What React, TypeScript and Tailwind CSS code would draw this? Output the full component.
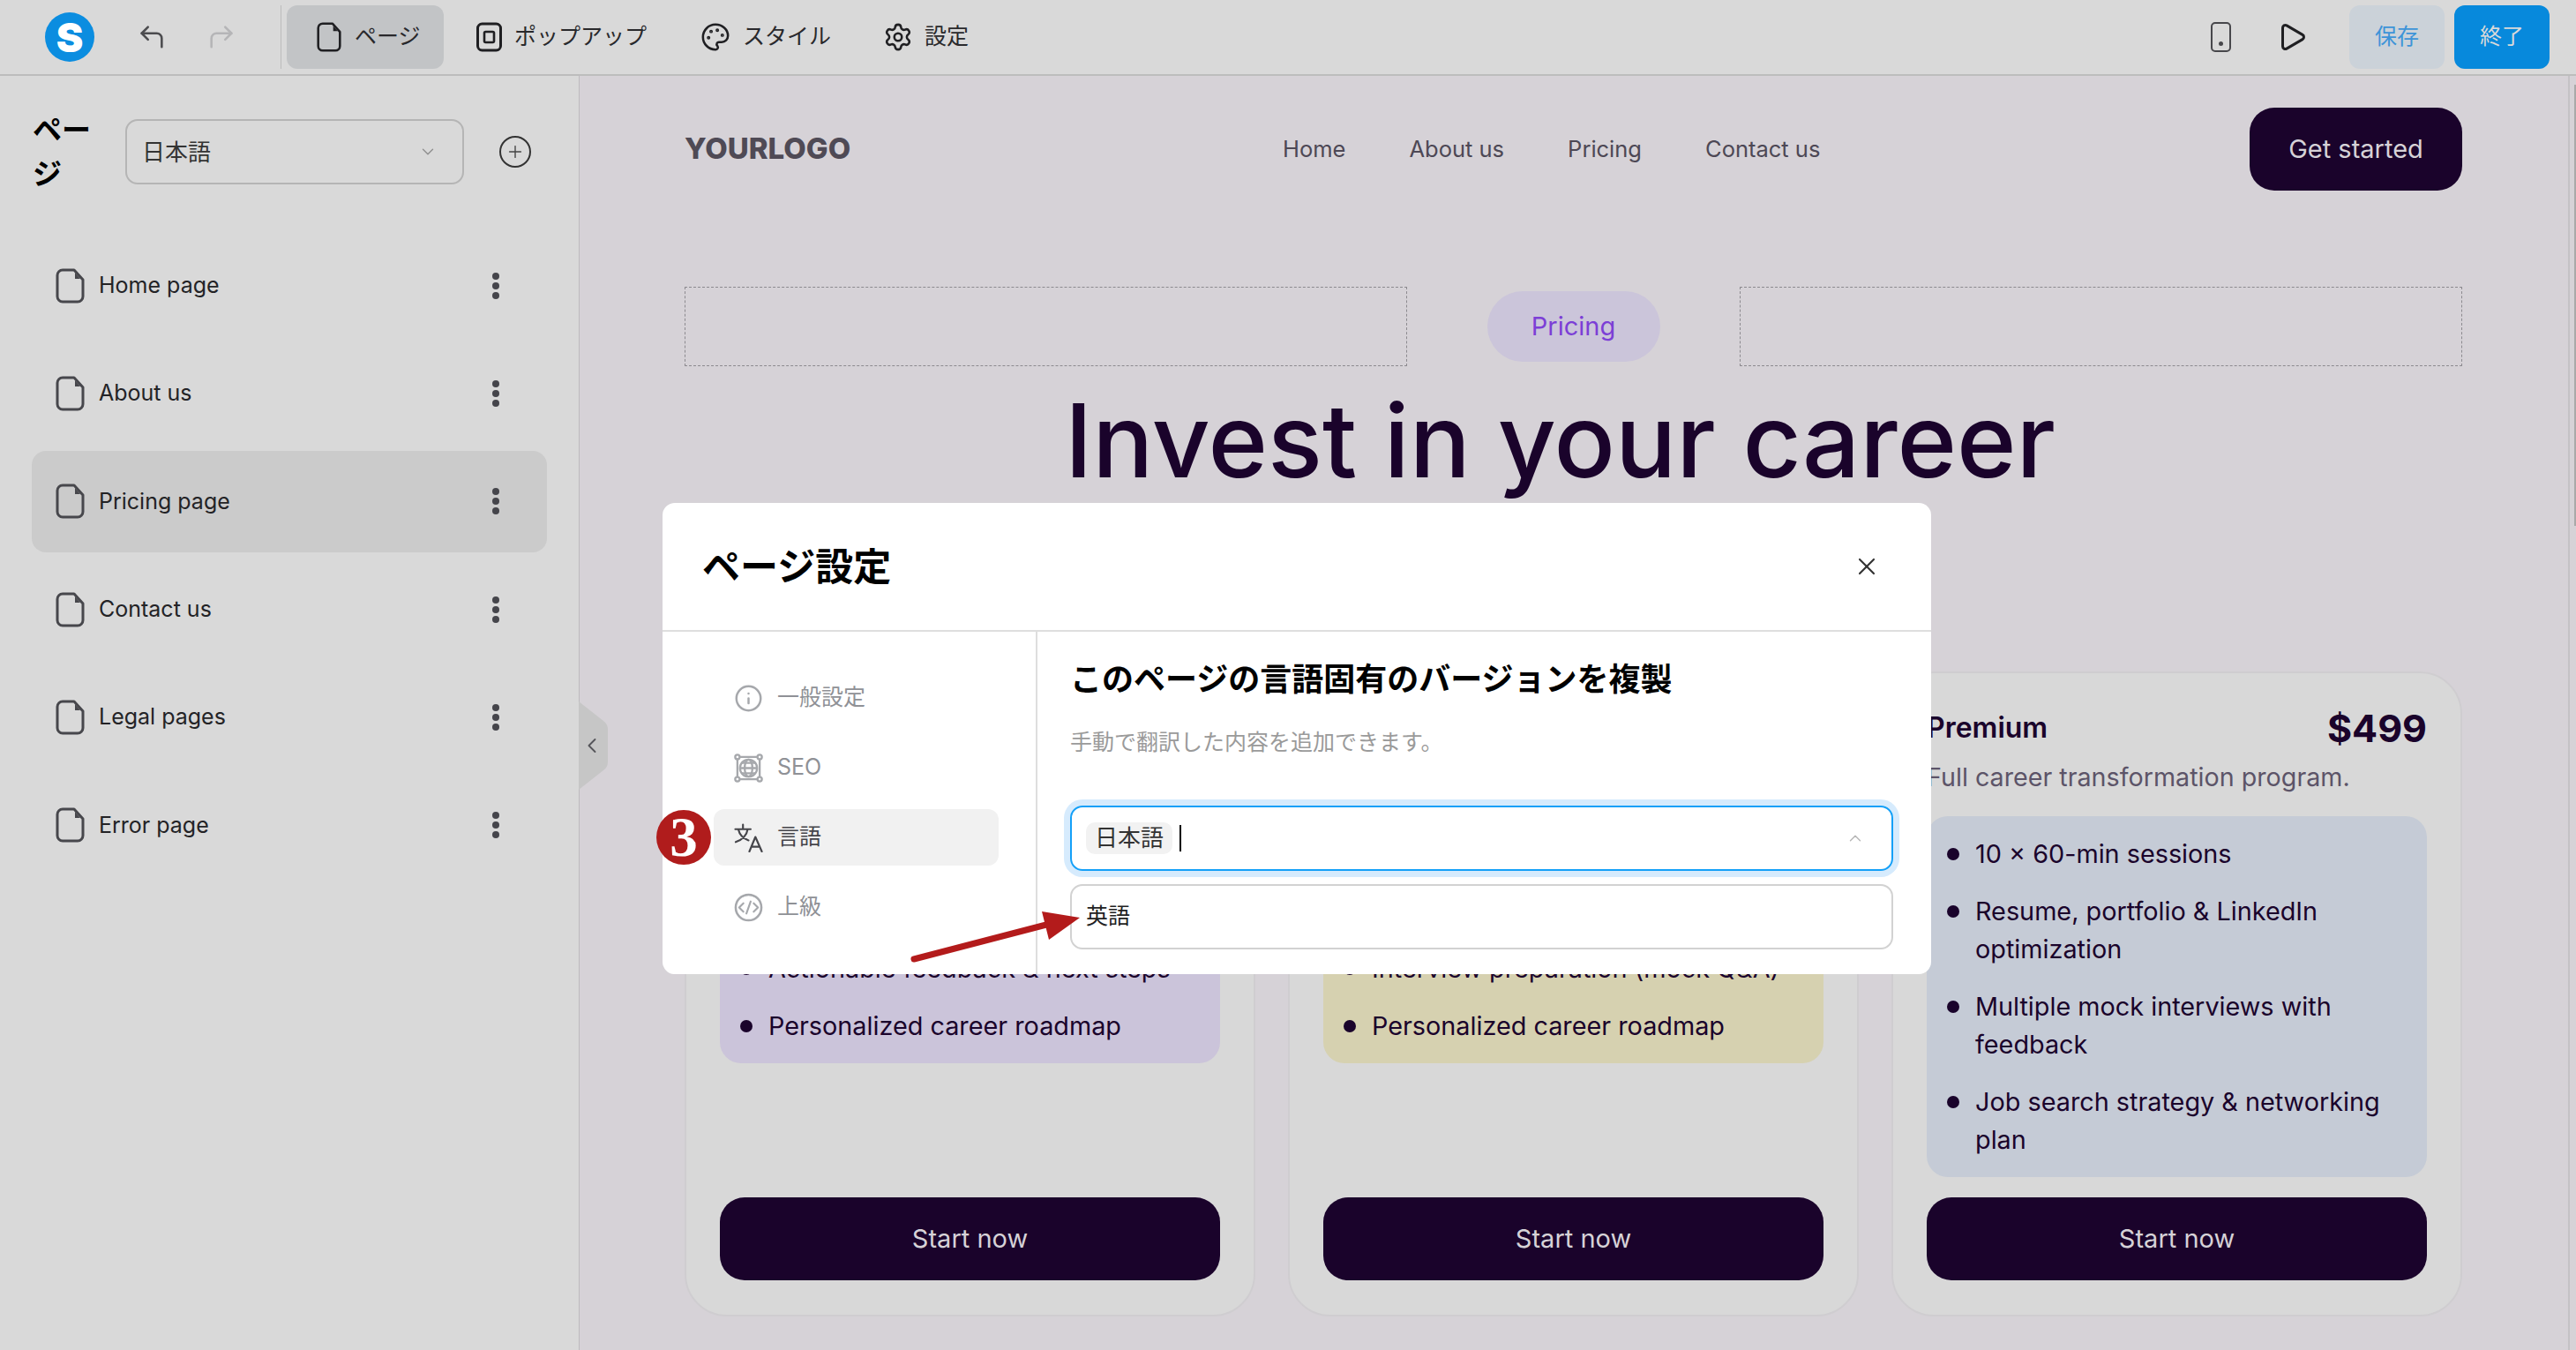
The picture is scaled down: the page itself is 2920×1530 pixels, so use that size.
import { CornerUpLeft, CornerUpRight, Palette, Settings, Play, ChevronDown, ChevronUp, ChevronLeft, Plus, X, Info } from "lucide-react";

const FONT = "font-['Inter','Noto_Sans_CJK_JP',sans-serif]";

const pages = ["Home page", "About us", "Pricing page", "Contact us", "Legal pages", "Error page"];

// the first two cards are mostly behind the dialog, only their lower rows show
const plans = [
  {
    name: "",
    price: "",
    blurb: "",
    panel: "bg-[#cbc4da]",
    items: ["Actionable feedback & next steps", "Personalized career roadmap"],
  },
  {
    name: "",
    price: "",
    blurb: "",
    panel: "bg-[#d6d1b0]",
    items: ["Interview preparation (mock Q&A)", "Personalized career roadmap"],
  },
  {
    name: "Premium",
    price: "$499",
    blurb: "Full career transformation program.",
    panel: "bg-[#c5cbd6]",
    items: [
      "10 × 60-min sessions",
      "Resume, portfolio & LinkedIn optimization",
      "Multiple mock interviews with feedback",
      "Job search strategy & networking plan",
    ],
  },
];

function FileIcon({ className }: { className?: string }) {
  return (
    <svg viewBox="0 0 33 40" className={className} fill="none" stroke="currentColor" strokeWidth="3" strokeLinejoin="round">
      <path d="M9 2h12l10 11v19a6 6 0 0 1-6 6H8a6 6 0 0 1-6-6V8a6 6 0 0 1 6-6z" />
      <path d="M22 5l6 7h-6z" fill="currentColor" stroke="none" />
    </svg>
  );
}

function Dots() {
  return (
    <svg viewBox="0 0 10 30" className="w-[10px] h-[30px] text-[#45454b]" fill="currentColor">
      <circle cx="5" cy="4" r="4" />
      <circle cx="5" cy="15" r="4" />
      <circle cx="5" cy="26" r="4" />
    </svg>
  );
}

function SeoIcon() {
  return (
    <svg viewBox="0 0 34 34" className="w-[33px] h-[33px]" fill="none" stroke="currentColor" strokeWidth="2.4">
      <circle cx="17" cy="17" r="10" />
      <ellipse cx="17" cy="17" rx="4.5" ry="10" />
      <path d="M7 17h20M9 11h16M9 23h16" />
      <circle cx="4" cy="4" r="2.6" />
      <circle cx="30" cy="4" r="2.6" />
      <circle cx="4" cy="30" r="2.6" />
      <circle cx="30" cy="30" r="2.6" />
      <path d="M7 4h20M7 30h20M4 7v20M30 7v20" />
    </svg>
  );
}

function CodeCircleIcon() {
  return (
    <svg viewBox="0 0 34 34" className="w-[33px] h-[33px]" fill="none" stroke="currentColor" strokeWidth="2.6" strokeLinecap="round" strokeLinejoin="round">
      <circle cx="17" cy="17" r="15" />
      <path d="M11 12l-5 5 5 5M23 12l5 5-5 5M19.5 10l-5 14" strokeWidth="2.2" />
    </svg>
  );
}

function TranslateIcon() {
  return (
    <svg viewBox="0 0 34 34" className="w-[33px] h-[33px]" fill="none" stroke="currentColor" strokeWidth="2.2" strokeLinecap="round" strokeLinejoin="round">
      <path d="M1.5 7h18M10.5 1.5V7M5 7c1.500 6.500 6 11 12 13M16 7c-1 6.500-6 12-14 15" />
      <path d="M18 33l7-17 7.500 17M20.500 27.500h9.500" />
    </svg>
  );
}

function PopupIcon() {
  return (
    <svg viewBox="0 0 29 34" className="w-[29px] h-[34px]" fill="none" stroke="#1f1f22" strokeWidth="3">
      <rect x="1.5" y="2" width="26" height="30" rx="5" />
      <rect x="9" y="11" width="11" height="12" rx="1.5" strokeWidth="2.6" />
    </svg>
  );
}

function TopBar() {
  return (
    <header className="h-[86px] shrink-0 flex items-center border-b-2 border-[#bdbdbd] bg-[#d9d9d9]">
      <div className="ml-[51px] w-[56px] h-[56px] rounded-full bg-[#0b8de0] flex items-center justify-center text-white font-black text-[46px] leading-none">
        S
      </div>
      <CornerUpLeft className="ml-[48px] w-[34px] h-[34px] text-[#4c4c4f]" strokeWidth={1.8} />
      <CornerUpRight className="ml-[45px] w-[34px] h-[34px] text-[#b5b5b7]" strokeWidth={1.8} />
      <div className="ml-[50px] w-px h-[72px] bg-[#bcbcbc]" />
      <div className="ml-[6px] w-[178px] h-[72px] rounded-[12px] bg-[#c2c4c6] flex items-center pl-[34px] gap-[15px]">
        <FileIcon className="w-[28px] h-[34px] text-[#1f1f22]" />
        <span className="text-[25px] text-[#29292c]">ページ</span>
      </div>
      <div className="ml-[37px] flex items-center gap-[14px]">
        <PopupIcon />
        <span className="text-[25px] text-[#29292c]">ポップアップ</span>
      </div>
      <div className="ml-[61px] flex items-center gap-[14px]">
        <Palette className="w-[34px] h-[34px] text-[#1f1f22]" strokeWidth={1.8} />
        <span className="text-[25px] text-[#29292c]">スタイル</span>
      </div>
      <div className="ml-[59px] flex items-center gap-[13px]">
        <Settings className="w-[34px] h-[34px] text-[#1f1f22]" strokeWidth={1.8} />
        <span className="text-[25px] text-[#29292c]">設定</span>
      </div>
      <div className="ml-auto mr-[30px] flex items-center">
        <div className="w-[23px] h-[34px] rounded-[5px] border-[2.5px] border-[#47474b] flex items-end justify-center pb-[5px]">
          <div className="w-[5px] h-[5px] rounded-full bg-[#47474b]" />
        </div>
        <Play className="ml-[51px] w-[36px] h-[36px] text-[#1f1f22]" strokeWidth={2} />
        <div className="ml-[47px] w-[108px] h-[72px] rounded-[12px] bg-[#cbd2d9] flex items-center justify-center text-[25px] text-[#3d94d8]">保存</div>
        <div className="ml-[11px] w-[108px] h-[72px] rounded-[12px] bg-[#0789dc] flex items-center justify-center text-[25px] text-[#d9d9d9]">終了</div>
      </div>
    </header>
  );
}

function Sidebar() {
  return (
    <aside className="relative w-[657px] shrink-0 bg-[#d9d9d9] border-r border-[#bdbbbe]">
      <div className="mt-[36px] h-[100px] pl-[37px] flex items-center">
        <h2 className="w-[68px] text-[33px] leading-[50px] font-bold text-black">ページ</h2>
        <div className="ml-[37px] w-[384px] h-[74px] rounded-[14px] border-2 border-[#b5b5b5] flex items-center justify-between pl-[17px] pr-[28px]">
          <span className="text-[26px] text-[#333]">日本語</span>
          <ChevronDown className="w-[22px] h-[22px] text-[#8f8f8f]" strokeWidth={1.5} />
        </div>
        <div className="ml-[40px] w-[36px] h-[36px] rounded-full border-2 border-[#333] flex items-center justify-center">
          <Plus className="w-[22px] h-[22px] text-[#444]" strokeWidth={1.5} />
        </div>
      </div>
      <ul className="mt-[44px] ml-[36px] mr-[36px] flex flex-col gap-[7.4px]">
        {pages.map((p) => (
          <li
            key={p}
            className={`h-[115px] rounded-[16px] flex items-center pl-[27px] pr-[53px] ${p === "Pricing page" ? "bg-[#cbcbcb]" : ""}`}
          >
            <FileIcon className="w-[33px] h-[40px] text-[#47474c]" />
            <span className="ml-[16px] text-[25px] text-[#232326]">{p}</span>
            <span className="ml-auto flex">
              <Dots />
            </span>
          </li>
        ))}
      </ul>
      <div className="absolute left-full top-[709px] w-[33px] h-[100px] text-[#c6c6c6]">
        <svg viewBox="0 0 33 100" className="w-[33px] h-[100px]" fill="currentColor">
          <path d="M0 0l28 22a12 12 0 0 1 5 10v36a12 12 0 0 1-5 10L0 100z" />
        </svg>
        <ChevronLeft className="absolute left-[1px] top-[36px] w-[28px] h-[28px] text-[#55555a]" strokeWidth={1.6} />
      </div>
    </aside>
  );
}

function PlanCard({ plan }: { plan: (typeof plans)[number] }) {
  return (
    <div className="h-[731px] rounded-[48px] border-2 border-[#cfcdd0] bg-[#d8d8d8] px-[38px] pt-[34px] pb-[39px] flex flex-col">
      <div className="flex items-center justify-between h-[56px]">
        <span className="text-[32px] font-semibold text-[#1a032b]">{plan.name}</span>
        <span className="text-[43px] font-bold text-[#1a032b]">{plan.price}</span>
      </div>
      <p className="mt-[7px] h-[42px] text-[28.700px] leading-[42px] whitespace-nowrap text-[#5c5468]">{plan.blurb}</p>
      <ul className={`mt-[23px] min-h-[280px] rounded-[24px] px-[23px] py-[21px] flex flex-col justify-end gap-[22px] ${plan.panel}`}>
        {plan.items.map((it) => (
          <li key={it} className="flex text-[28.800px] leading-[43px] text-[#1a032b]">
            <span className="mt-[15px] w-[14px] h-[14px] shrink-0 rounded-full bg-[#1a032b]" />
            <span className="ml-[18px]">{it}</span>
          </li>
        ))}
      </ul>
      <button className="mt-auto h-[94px] rounded-[28px] bg-[#1a032b] text-[29px] text-[#d6d2d7]">Start now</button>
    </div>
  );
}

function Canvas() {
  return (
    <main className="flex-1 flex bg-[#d6d2d7] min-w-0">
      <div className="flex-1 pl-[119px] pr-[120px] pt-[36px]">
        <nav className="flex items-center h-[94px]">
          <span className="w-[678px] text-[33px] font-extrabold text-[#4f4a55]">YOURLOGO</span>
          <div className="flex gap-[72px] text-[25.500px] text-[#4d4855]">
            <span>Home</span>
            <span>About us</span>
            <span>Pricing</span>
            <span>Contact us</span>
          </div>
          <button className="ml-auto w-[241px] h-[94px] rounded-[28px] bg-[#1a032b] text-[29px] text-[#d6d2d7]">Get started</button>
        </nav>
        <div className="mt-[109px] flex items-center justify-between">
          <div className="w-[819px] h-[90px] border border-dashed border-[#8c8a8f]" />
          <div className="w-[196px] h-[80px] rounded-full bg-[#cbc5da] flex items-center justify-center text-[29px] text-[#7c3fd6]">Pricing</div>
          <div className="w-[819px] h-[90px] border border-dashed border-[#8c8a8f]" />
        </div>
        <h1 className="mt-[17px] h-[136px] pr-[30px] text-center text-[115px] leading-[136px] font-medium text-[#1a032b]">Invest in your career</h1>
        <div className="mt-[193px] grid grid-cols-3 gap-[37px]">
          {plans.map((p) => (
            <PlanCard key={p.panel} plan={p} />
          ))}
        </div>
      </div>
      <div className="w-[9px] shrink-0 border-l-2 border-[#c4c2c5] pt-[10px]">
        <div className="ml-auto w-[2px] h-[500px] bg-[#a9a9a9]" />
      </div>
    </main>
  );
}

const sideItems = [
  { label: "一般設定", icon: <Info className="w-[33px] h-[33px]" strokeWidth={1.8} /> },
  { label: "SEO", icon: <SeoIcon /> },
  { label: "言語", icon: <TranslateIcon />, active: true },
  { label: "上級", icon: <CodeCircleIcon /> },
];

function Modal() {
  return (
    <div className="absolute left-[751px] top-[570px] w-[1438px] h-[534px] rounded-[14px] bg-white flex flex-col overflow-hidden">
      <div className="h-[146px] shrink-0 border-b-2 border-[#dedede] flex items-center justify-between pl-[45px] pr-[57px]">
        <h2 className="text-[43px] font-bold text-black">ページ設定</h2>
        <X className="w-[32px] h-[32px] text-[#333]" strokeWidth={1.6} />
      </div>
      <div className="flex-1 flex">
        <div className="w-[425px] shrink-0 border-r-2 border-[#dedede] pl-[58px] pt-[43px] flex flex-col gap-[15px]">
          {sideItems.map((s) => (
            <div
              key={s.label}
              className={`w-[323px] h-[64px] rounded-[12px] flex items-center pl-[23px] gap-[16px] text-[25px] ${s.active ? "bg-[#f1f1f1] text-[#45454a]" : "text-[#a6a8ac]"}`}
            >
              {s.icon}
              <span className={s.active ? "text-[#45454a]" : "text-[#8f9196]"}>{s.label}</span>
            </div>
          ))}
        </div>
        <div className="flex-1 pl-[37px] pr-[43px]">
          <h3 className="mt-[28px] text-[36px] leading-[52px] font-bold text-black">このページの言語固有のバージョンを複製</h3>
          <p className="mt-[27px] text-[25px] leading-[36px] text-[#9a9a9a]">手動で翻訳した内容を追加できます。</p>
          <div className="mt-[54px] h-[74px] rounded-[14px] border-2 border-[#14a0f8] ring-[7px] ring-[#d6ebfd] flex items-center pl-[16px] pr-[30px]">
            <span className="h-[36px] px-[10px] rounded-[10px] bg-[#f2f2f2] text-[26px] leading-[36px] text-[#333]">日本語</span>
            <span className="ml-[8px] w-[2px] h-[30px] bg-black" />
            <ChevronUp className="ml-auto w-[22px] h-[22px] text-[#b5b5b5]" strokeWidth={1.5} />
          </div>
          <div className="mt-[15px] h-[74px] rounded-[14px] border-2 border-[#d2d2d2] flex items-center pl-[16px] text-[25px] text-[#222]">英語</div>
        </div>
      </div>
    </div>
  );
}

export default function App() {
  return (
    <div className={`relative w-[2920px] h-[1530px] overflow-hidden flex flex-col ${FONT}`}>
      <TopBar />
      <div className="flex-1 flex min-h-0">
        <Sidebar />
        <Canvas />
      </div>
      <Modal />
      {/* step marker and arrow sit on top of the dialog */}
      <div className="absolute left-[744px] top-[918px] w-[62px] h-[62px] rounded-full bg-[#b01c1c] flex items-center justify-center text-white font-bold text-[63px] leading-none font-['Liberation_Serif',serif]">
        3
      </div>
      <svg className="absolute left-[1020px] top-[1020px] w-[220px] h-[80px]" viewBox="1020 1020 220 80">
        <path d="M1036 1087L1186 1048" stroke="#b31b1b" strokeWidth="7" strokeLinecap="round" />
        <path d="M1224 1040L1181 1033L1189 1065Z" fill="#b31b1b" />
      </svg>
    </div>
  );
}
